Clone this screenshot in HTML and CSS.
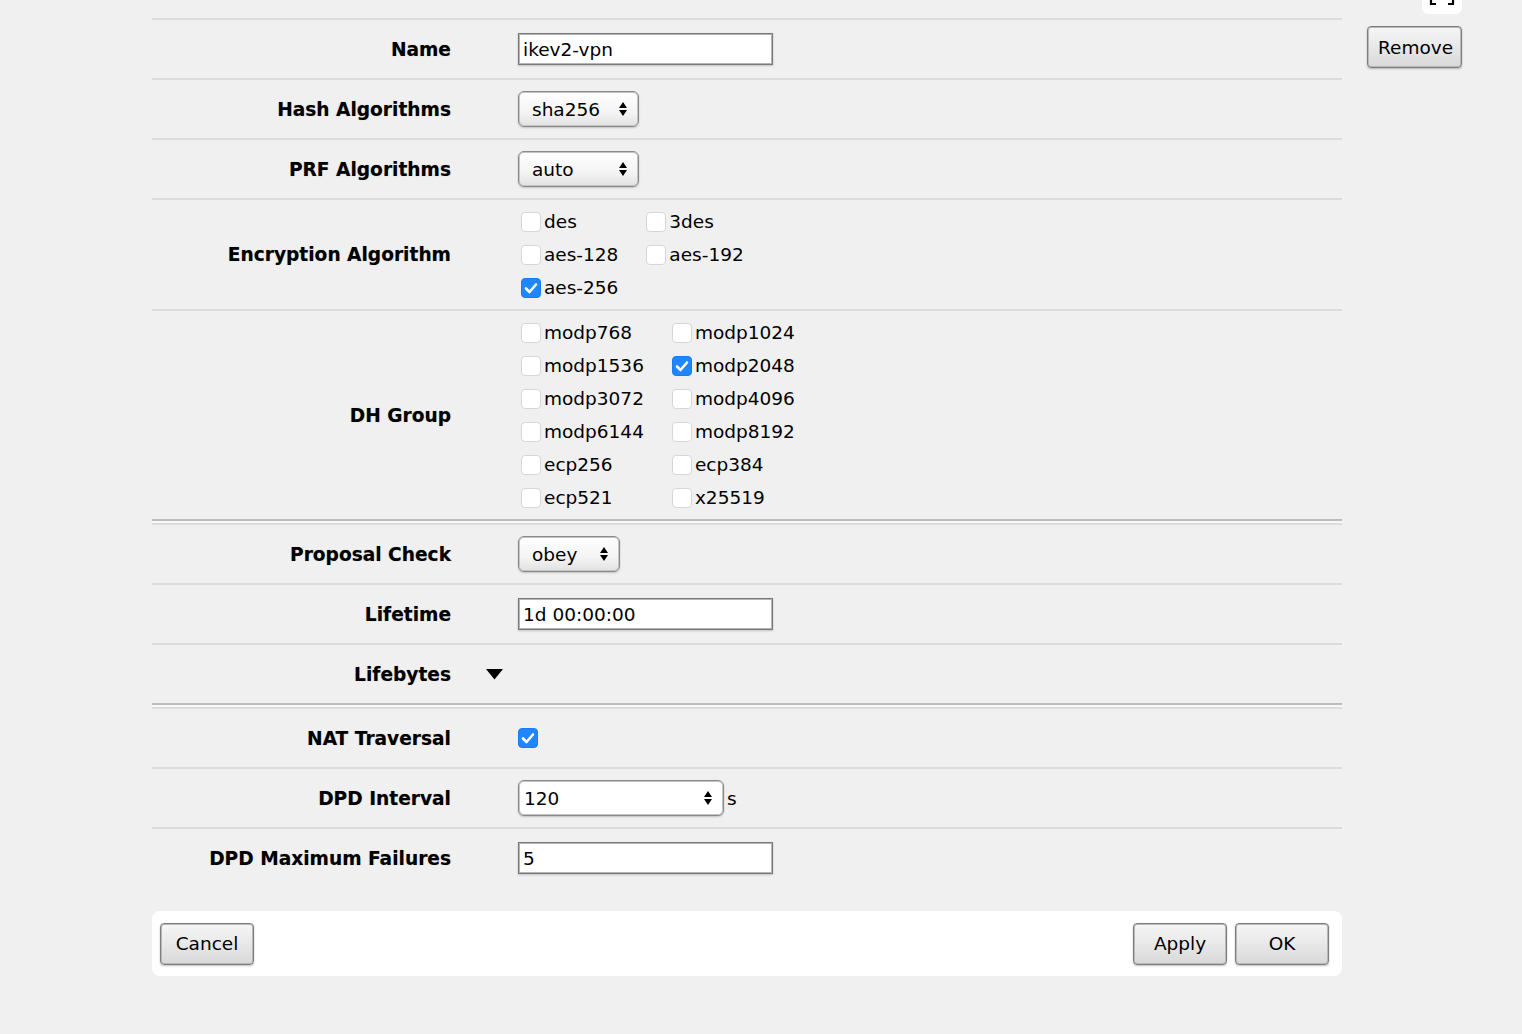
FILE: index.html
```html
<!DOCTYPE html>
<html>
<head>
<meta charset="utf-8">
<link rel="stylesheet" href="styles.css">
</head>
<body>
<div class="page">
  <div class="form">
    <div class="row">
      <div class="label">Name</div><div class="mark"></div>
      <div class="value"><input class="text" type="text" value="ikev2-vpn"></div>
    </div>
    <div class="row">
      <div class="label">Hash Algorithms</div><div class="mark"></div>
      <div class="value"><div class="select w121"><span>sha256</span><svg class="arr" width="10" height="16" viewBox="0 0 10 16"><path d="M5 1 L9 7 H1 Z M5 15 L9 9 H1 Z" fill="#000"/></svg></div></div>
    </div>
    <div class="row">
      <div class="label">PRF Algorithms</div><div class="mark"></div>
      <div class="value"><div class="select w121"><span>auto</span><svg class="arr" width="10" height="16" viewBox="0 0 10 16"><path d="M5 1 L9 7 H1 Z M5 15 L9 9 H1 Z" fill="#000"/></svg></div></div>
    </div>
    <div class="row">
      <div class="label">Encryption Algorithm</div><div class="mark"></div>
      <div class="value">
        <div class="checks">
          <label class="cb"><span class="box"></span>des</label>
          <label class="cb"><span class="box"></span>3des</label>
          <label class="cb"><span class="box"></span>aes-128</label>
          <label class="cb"><span class="box"></span>aes-192</label>
          <label class="cb"><span class="box on"><svg width="20" height="20" viewBox="0 0 20 20"><path d="M5 10.5 L8.5 14 L15 6.5" fill="none" stroke="#fff" stroke-width="2.6" stroke-linecap="round" stroke-linejoin="round"/></svg></span>aes-256</label>
        </div>
      </div>
    </div>
    <div class="row">
      <div class="label">DH Group</div><div class="mark"></div>
      <div class="value">
        <div class="checks">
          <label class="cb"><span class="box"></span>modp768</label>
          <label class="cb"><span class="box"></span>modp1024</label>
          <label class="cb"><span class="box"></span>modp1536</label>
          <label class="cb"><span class="box on"><svg width="20" height="20" viewBox="0 0 20 20"><path d="M5 10.5 L8.5 14 L15 6.5" fill="none" stroke="#fff" stroke-width="2.6" stroke-linecap="round" stroke-linejoin="round"/></svg></span>modp2048</label>
          <label class="cb"><span class="box"></span>modp3072</label>
          <label class="cb"><span class="box"></span>modp4096</label>
          <label class="cb"><span class="box"></span>modp6144</label>
          <label class="cb"><span class="box"></span>modp8192</label>
          <label class="cb"><span class="box"></span>ecp256</label>
          <label class="cb"><span class="box"></span>ecp384</label>
          <label class="cb"><span class="box"></span>ecp521</label>
          <label class="cb"><span class="box"></span>x25519</label>
        </div>
      </div>
    </div>
    <div class="divider"></div>
    <div class="row">
      <div class="label">Proposal Check</div><div class="mark"></div>
      <div class="value"><div class="select w102"><span>obey</span><svg class="arr" width="10" height="16" viewBox="0 0 10 16"><path d="M5 1 L9 7 H1 Z M5 15 L9 9 H1 Z" fill="#000"/></svg></div></div>
    </div>
    <div class="row">
      <div class="label">Lifetime</div><div class="mark"></div>
      <div class="value"><input class="text" type="text" value="1d 00:00:00"></div>
    </div>
    <div class="row">
      <div class="label">Lifebytes</div>
      <div class="mark"><svg width="17" height="11" viewBox="0 0 17 11"><path d="M0 0 H17 L8.5 10.5 Z" fill="#000"/></svg></div>
      <div class="value"></div>
    </div>
    <div class="divider"></div>
    <div class="row">
      <div class="label">NAT Traversal</div><div class="mark"></div>
      <div class="value"><span class="box on solo"><svg width="20" height="20" viewBox="0 0 20 20"><path d="M5 10.5 L8.5 14 L15 6.5" fill="none" stroke="#fff" stroke-width="2.6" stroke-linecap="round" stroke-linejoin="round"/></svg></span></div>
    </div>
    <div class="row">
      <div class="label">DPD Interval</div><div class="mark"></div>
      <div class="value">
        <div class="number"><span>120</span><svg class="arr" width="10" height="16" viewBox="0 0 10 16"><path d="M5 1 L9 7 H1 Z M5 15 L9 9 H1 Z" fill="#000"/></svg></div>
        <span class="unit">s</span>
      </div>
    </div>
    <div class="row">
      <div class="label">DPD Maximum Failures</div><div class="mark"></div>
      <div class="value"><input class="text" type="text" value="5"></div>
    </div>
    <div class="footer">
      <button class="btn">Cancel</button>
      <div class="spacer"></div>
      <button class="btn">Apply</button>
      <button class="btn">OK</button>
    </div>
  </div>
  <div class="side">
    <div class="tab"><svg width="40" height="14" viewBox="0 0 40 14"><path d="M9 0 V4 H14 M31 0 V4 H26" fill="none" stroke="#000" stroke-width="2.2"/></svg></div>
    <button class="btn">Remove</button>
  </div>
</div>
</body>
</html>
```

FILE: styles.css
```css
html, body {
  margin: 0;
  padding: 0;
  background: #f0f0f0;
  font-family: "DejaVu Sans", Verdana, sans-serif;
  font-size: 18.5px;
  color: #000;
}

.page {
  display: flex;
  align-items: flex-start;
  padding-left: 152px;
}

.form {
  width: 1190px;
  padding-top: 18px;
}

.row {
  display: grid;
  grid-template-columns: 299px 67px 1fr;
  align-items: center;
  min-height: 58px;
  border-top: 2px solid #dcdcdc;
}

.divider {
  height: 2px;
  background: #bcbcbc;
  border-bottom: 2px solid #f8f8f8;
}

.label {
  text-align: right;
  font-weight: bold;
  font-size: 18.6px;
  text-shadow: 0 0 1px rgba(0, 0, 0, 0.3);
}

.mark {
  padding-left: 35px;
  display: flex;
  align-items: center;
}

.value {
  display: flex;
  align-items: center;
}

.text {
  width: 255px;
  height: 32px;
  box-sizing: border-box;
  margin: 0;
  padding: 0 4px;
  border: 1px solid #7a7a7a;
  box-shadow: inset 0 0 0 1px #b4b4b4, 0 1px 2px rgba(0, 0, 0, 0.2);
  background: #fff;
  font-family: "DejaVu Sans", Verdana, sans-serif;
  font-size: 18.5px;
  color: #000;
  outline: none;
}

.select {
  height: 36px;
  box-sizing: border-box;
  border: 1px solid #8a8a8a;
  border-radius: 6px;
  box-shadow: inset 0 0 0 1px #c4c4c4, 0 1px 2px rgba(0, 0, 0, 0.2);
  background: linear-gradient(#ffffff, #f4f4f4 60%, #e2e2e2);
  display: flex;
  align-items: center;
  justify-content: space-between;
  padding: 0 10px 0 13px;
}

.w121 { width: 121px; }
.w102 { width: 102px; }

.arr { display: block; }

.checks {
  display: inline-grid;
  grid-template-columns: auto auto;
  column-gap: 25px;
  padding: 5px 0 5px;
}

.cb {
  display: flex;
  align-items: center;
  height: 33px;
  padding-left: 3px;
}

.box {
  width: 20px;
  height: 20px;
  box-sizing: border-box;
  border: 1px solid #d6d6d6;
  border-radius: 4px;
  background: #fff;
  margin-right: 3px;
  display: inline-block;
  flex: none;
}

.box.on {
  border-color: #1a7cf0;
  background: #1f86ff;
}

.box svg {
  display: block;
  margin: -1px;
}

.box.solo {
  margin-left: 0;
}

.number {
  width: 206px;
  height: 36px;
  box-sizing: border-box;
  border: 1px solid #8a8a8a;
  border-radius: 6px;
  box-shadow: inset 0 0 0 1px #c4c4c4, 0 1px 2px rgba(0, 0, 0, 0.2);
  background: #fff;
  display: flex;
  align-items: center;
  justify-content: space-between;
  padding: 0 10px 0 5px;
}

.unit {
  margin-left: 3px;
}

.footer {
  margin-top: 24px;
  height: 65px;
  box-sizing: border-box;
  background: #fff;
  border-radius: 8px;
  display: flex;
  align-items: center;
  padding: 0 13px 0 8px;
  gap: 8px;
}

.spacer { flex: 1; }

.btn {
  height: 42px;
  min-width: 94px;
  box-sizing: border-box;
  padding: 0 10px;
  border: 1px solid #7e7e7e;
  border-radius: 4px;
  box-shadow: inset 0 0 0 1px #b8b8b8, 0 1px 2px rgba(0, 0, 0, 0.25);
  background: linear-gradient(#f6f6f6, #e8e8e8 50%, #d8d8d8);
  font-family: "DejaVu Sans", Verdana, sans-serif;
  font-size: 18.5px;
  color: #000;
}

.side {
  margin-left: 25px;
  width: 95px;
  display: flex;
  flex-direction: column;
  align-items: flex-end;
}

.tab {
  width: 40px;
  height: 14px;
  background: #fff;
  border-radius: 0 0 6px 6px;
  margin-right: 0;
  margin-bottom: 12px;
}

.tab svg { display: block; }

.side .btn {
  width: 95px;
}
```
